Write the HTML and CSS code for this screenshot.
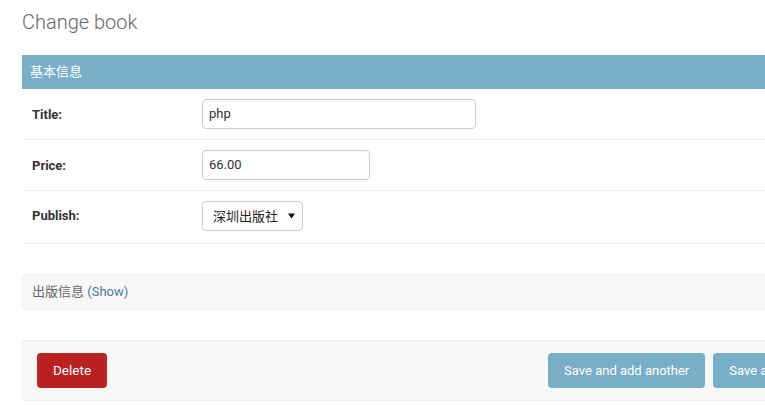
FILE: index.html
```html
<!DOCTYPE html>
<html lang="en">
<head>
<meta charset="utf-8">
<title>Change book</title>
<link rel="stylesheet" href="styles.css">
</head>
<body>
<div class="content">
  <h1 class="page-title">Change book</h1>
  <form class="change-form">
    <fieldset class="module">
      <h2 class="module-title">基本信息</h2>
      <div class="form-row">
        <label class="required">Title:</label>
        <div class="input text-title">php</div>
      </div>
      <div class="form-row">
        <label class="required">Price:</label>
        <div class="input text-price">66.00</div>
      </div>
      <div class="form-row row-select">
        <label class="required">Publish:</label>
        <div class="select">
          <span class="select-text">深圳出版社</span>
          <svg class="select-arrow" width="7" height="6" viewBox="0 0 7 6"><path d="M0 0.5H7L3.5 5.5Z" fill="#111"/></svg>
        </div>
      </div>
    </fieldset>
    <fieldset class="module collapsed">
      <h2 class="collapsed-title">出版信息 <a class="collapse-toggle" href="#">(Show)</a></h2>
    </fieldset>
    <div class="submit-row">
      <a class="deletelink" href="#">Delete</a>
      <div class="save-group">
        <span class="btn">Save and add another</span>
        <span class="btn">Save and continue editing</span>
        <span class="btn btn-default">SAVE</span>
      </div>
    </div>
  </form>
</div>
</body>
</html>
```

FILE: styles.css
```css
html, body {
  margin: 0;
  padding: 0;
  overflow: hidden;
  background: #fff;
}
body {
  font-family: Roboto, "Noto Sans CJK SC", "DejaVu Sans", Arial, sans-serif;
  font-size: 14px;
  color: #333;
}
.content {
  width: 958px;
  padding: 10px 0 0 22px;
}
.page-title {
  margin: 0 0 21px;
  font-size: 20px;
  line-height: 24px;
  font-weight: 300;
  color: #666;
}
.change-form {
  margin: 0;
}
.module {
  margin: 0 0 30px;
  padding: 0;
  border: none;
  min-width: 0;
}
.module-title {
  margin: 0;
  padding: 8px;
  font-size: 13px;
  line-height: 18px;
  font-weight: 400;
  background: #79aec8;
  color: #fff;
  font-family: Roboto, "Noto Sans CJK SC", sans-serif;
}
.form-row {
  display: flex;
  align-items: center;
  padding: 10px;
  border-bottom: 1px solid #eee;
  font-size: 13px;
}
.row-select {
  padding-bottom: 12px;
  padding-top: 10px;
  align-items: flex-start;
}
.row-select label {
  padding-top: 7px;
}
.form-row label {
  width: 170px;
  flex: none;
  color: #333;
  font-weight: bold;
  font-size: 13px;
}
.input {
  box-sizing: border-box;
  height: 30px;
  border: 1px solid #ccc;
  border-radius: 4px;
  padding: 0 6px;
  font-size: 13px;
  line-height: 28px;
  color: #333;
}
.text-title {
  width: 274px;
}
.text-price {
  width: 168px;
}
.select {
  box-sizing: border-box;
  height: 30px;
  width: 101px;
  border: 1px solid #ccc;
  border-radius: 4px;
  display: flex;
  align-items: center;
  padding: 0 0 0 10px;
  font-size: 13px;
  color: #222;
}
.select-text {
  font-family: "Noto Sans CJK SC", sans-serif;
  line-height: 28px;
}
.select-arrow {
  margin-left: 10px;
}
.collapsed {
  border: 1px solid #eee;
  border-radius: 4px;
  background: #f8f8f8;
}
.collapsed-title {
  margin: 0;
  padding: 8px 9px;
  font-size: 13px;
  line-height: 18px;
  font-weight: 400;
  color: #666;
  font-family: Roboto, "Noto Sans CJK SC", sans-serif;
}
.collapse-toggle {
  color: #447e9b;
  text-decoration: none;
}
.submit-row {
  display: flex;
  align-items: center;
  padding: 12px 14px;
  background: #f8f8f8;
  border: 1px solid #eee;
  border-radius: 4px;
}
.deletelink {
  display: block;
  background: #ba2121;
  color: #fff;
  border-radius: 4px;
  padding: 10px 16px;
  line-height: 15px;
  font-size: 13.5px;
  text-decoration: none;
}
.save-group {
  margin-left: auto;
  display: flex;
  gap: 8px;
}
.btn {
  display: block;
  background: #79aec8;
  color: #fff;
  border-radius: 4px;
  padding: 10px 16px;
  line-height: 15px;
  font-size: 13px;
}
.btn-default {
  background: #417690;
}
```
